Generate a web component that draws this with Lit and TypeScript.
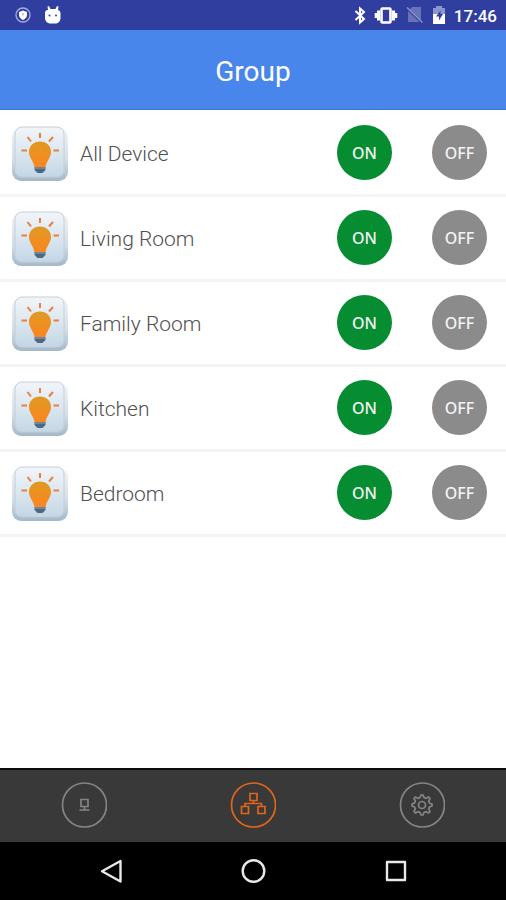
import { LitElement, html, css, svg } from "lit";
import { customElement, property, state } from "lit/decorators.js";
import { classMap } from "lit/directives/class-map.js";

const bulbIcon = html`<svg class="bulb" viewBox="0 0 58 56" aria-hidden="true">
  <defs>
    <linearGradient id="tile" x1="0" y1="0" x2="0" y2="1">
      <stop offset="0" stop-color="#f1f5f9" />
      <stop offset="0.5" stop-color="#dbe7f0" />
      <stop offset="1" stop-color="#c3d6e6" />
    </linearGradient>
    <linearGradient id="rim" x1="0" y1="0" x2="0" y2="1">
      <stop offset="0" stop-color="#f1f4f7" />
      <stop offset="0.6" stop-color="#d3dee8" />
      <stop offset="1" stop-color="#a3b8ca" />
    </linearGradient>
    <linearGradient id="glass" x1="0" y1="0" x2="0" y2="1">
      <stop offset="0" stop-color="#df9a22" />
      <stop offset="1" stop-color="#fb8522" />
    </linearGradient>
  </defs>
  <rect x="1" y="2" width="56" height="53" rx="9" fill="url(#rim)" />
  <rect x="4" y="1" width="49" height="50" rx="7" fill="url(#tile)" stroke="#c5ced6" />
  <path d="M29 15.500c-6.500 0-11 4.500-11 10.500 0 5.500 4 8 5.500 15h11c1.500-7 5.500-9.500 5.500-15C40 20 35.500 15.500 29 15.500z" fill="url(#glass)" />
  <path d="M23.500 41h11v3l-3 3h-5l-3-3z" fill="#4c6980" />
  <path d="M23.500 42h11" stroke="#8fa5b8" />
  <g stroke="#ee7d40" stroke-width="2" fill="none">
    <path d="M29 7v5M16.500 11l3.500 4.500M42 11l-4 4.500M10.500 24.500h5.500M42.500 24.500h5.500" />
  </g>
</svg>`;

const tabIcons = {
  device: svg`<path d="M20 17.500h7v7h-7zM23.500 25v3M18.500 28h10" />`,
  group: svg`<path d="M20 11.500h7v7h-7zM11.500 24.500h7v7h-7zM28 24.500h7v7h-7zM23.500 18.500v3M15 24.500v-3h16.500v3" />`,
  settings: svg`<circle cx="23" cy="23" r="3.500" />
    <path d="M21 15.500 22 13h2l1 2.500 2 .8 2.500-1.300 1.500 1.500-1.300 2.500.8 2 2.500 1v2l-2.500 1-.8 2 1.300 2.500-1.500 1.500-2.500-1.300-2 .8-1 2.500h-2l-1-2.500-2-.8-2.500 1.300-1.500-1.500 1.300-2.500-.8-2-2.500-1v-2l2.500-1 .8-2-1.300-2.500 1.500-1.500 2.500 1.300z" />`,
};

type Tab = keyof typeof tabIcons;

@customElement("status-bar")
class StatusBar extends LitElement {
  static styles = css`
    :host {
      display: flex;
      justify-content: space-between;
      align-items: center;
      height: 30px;
      padding: 0 9px 0 14px;
      background: #303f9f;
      color: #fff;
      font: 500 17px/30px Roboto, sans-serif;
    }
    .side {
      display: flex;
      align-items: center;
    }
    .notices {
      gap: 12px;
    }
    .system {
      gap: 8px;
    }
    svg {
      display: block;
      fill: #fff;
    }
    time {
      padding-top: 2px;
    }
  `;

  render() {
    return html`
      <div class="side notices">
        <svg width="18" height="18" viewBox="0 0 18 18">
          <circle cx="9" cy="9" r="7" fill="none" stroke="#a6addb" stroke-width="1.300" />
          <path d="M9 4.500 13 6v3c0 2.500-2 4-4 5-2-1-4-2.500-4-5V6z" />
          <path d="M8 7.500h2L9 10z" fill="#8f98d0" />
        </svg>
        <svg width="18" height="20" viewBox="0 0 18 20">
          <path d="M3.500 1.500 5 1l1.500 3h5L13 1l1.500.5-.5 3.500a3 3 0 0 1 2.500 3v5c0 3-2 5-4 5.500h-7C3 18 1 16 1 13V8a3 3 0 0 1 3-3z" />
          <circle cx="5.500" cy="10.500" r="1" fill="#303f9f" />
          <circle cx="12" cy="10.500" r="1" fill="#303f9f" />
        </svg>
      </div>
      <div class="side system">
        <svg width="12" height="20" viewBox="0 0 12 20">
          <path d="M1.500 6 10 14l-4 3.500v-14L10 7l-8.500 8" fill="none" stroke="#fff" stroke-width="2" />
        </svg>
        <svg width="24" height="18" viewBox="0 0 24 18">
          <rect x="7.500" y="2.500" width="9" height="14" rx="1" fill="none" stroke="#fff" stroke-width="2.600" />
          <path d="M4.500 4.500v10M19.500 4.500v10" stroke="#fff" stroke-width="3" />
          <path d="M2 7v5M22 7v5" stroke="#fff" stroke-width="2.600" />
        </svg>
        <svg width="18" height="18" viewBox="0 0 18 18">
          <path d="M6 1h9v15H2V5z" fill="#6771b8" />
          <path d="M1 2.500 16.500 17.500" stroke="#303f9f" stroke-width="2" />
          <path d="M1 1.500 16.500 16.500" stroke="#8c95cc" stroke-width="1.300" />
        </svg>
        <svg width="14" height="18" viewBox="0 0 14 18">
          <path d="M4 0h6v2h3v6H1V2h3z" fill="#8c95cc" />
          <path d="M1 8h12v10H1z" />
          <path d="M8.500 4.500 4 10.500h3v4l4-6.500H8.500z" fill="#303f9f" />
        </svg>
        <time>17:46</time>
      </div>
    `;
  }
}

@customElement("group-row")
class GroupRow extends LitElement {
  @property() name = "";

  static styles = css`
    :host {
      display: flex;
      align-items: center;
      gap: 11px;
      padding: 13px 19px 14px 11px;
      border-bottom: 3px solid #f4f4f4;
    }
    .bulb {
      flex: none;
      width: 58px;
      height: 56px;
      margin-bottom: -3px;
    }
    .name {
      flex: 1;
      padding-top: 2px;
      color: #505050;
      font: 300 21px/28px Roboto, sans-serif;
    }
    .actions {
      display: flex;
      gap: 40px;
    }
    .power {
      width: 55px;
      height: 55px;
      padding: 0;
      border: 0;
      border-radius: 50%;
      color: #f4f4f4;
      font: 500 16px/20px "Noto Sans", sans-serif;
      cursor: pointer;
    }
    .on {
      background: #068c31;
    }
    .off {
      background: #8b8b8b;
    }
  `;

  render() {
    return html`
      ${bulbIcon}
      <span class="name">${this.name}</span>
      <div class="actions">
        <button class="power on" aria-label="${this.name} ON">ON</button>
        <button class="power off" aria-label="${this.name} OFF">OFF</button>
      </div>
    `;
  }
}

@customElement("tab-bar")
class TabBar extends LitElement {
  @state() private current: Tab = "group";

  static styles = css`
    :host {
      display: grid;
      grid-template-columns: repeat(3, 1fr);
      justify-items: center;
      padding: 12px 0 14px;
      border-top: 2px solid #0c0c0c;
      background: #393939;
    }
    .tab {
      padding: 0;
      border: 0;
      background: none;
      color: #858585;
      cursor: pointer;
    }
    .current {
      color: #e2661a;
    }
    svg {
      display: block;
      width: 46px;
      height: 46px;
      fill: none;
      stroke: currentColor;
      stroke-width: 1.7;
    }
  `;

  render() {
    return (Object.keys(tabIcons) as Tab[]).map(
      (tab) => html`<button
        class=${classMap({ tab: true, current: tab === this.current })}
        aria-label=${tab}
        @click=${() => (this.current = tab)}
      >
        <svg viewBox="0 0 46 46"><circle cx="23.500" cy="23" r="22" />${tabIcons[tab]}</svg>
      </button>`
    );
  }
}

@customElement("nav-keys")
class NavKeys extends LitElement {
  static styles = css`
    :host {
      display: grid;
      grid-template-columns: repeat(3, 1fr);
      justify-items: center;
      align-items: center;
      height: 58px;
      padding: 0 8%;
      background: #000;
    }
    .key {
      padding: 0;
      border: 0;
      background: none;
      cursor: pointer;
    }
    svg {
      display: block;
      width: 26px;
      height: 26px;
      fill: none;
      stroke: #e8e8e8;
      stroke-width: 2.4;
      stroke-linejoin: round;
    }
  `;

  render() {
    return html`
      <button class="key" aria-label="back">
        <svg viewBox="0 0 26 26"><path d="M22.500 3v20.500L4 13.200z" /></svg>
      </button>
      <button class="key" aria-label="home">
        <svg viewBox="0 0 26 26"><circle cx="13.500" cy="13" r="10.800" /></svg>
      </button>
      <button class="key" aria-label="recents">
        <svg viewBox="0 0 26 26"><rect x="5" y="4" width="18" height="18" /></svg>
      </button>
    `;
  }
}

@customElement("app-root")
class AppRoot extends LitElement {
  private groups = ["All Device", "Living Room", "Family Room", "Kitchen", "Bedroom"];

  static styles = css`
    :host {
      display: flex;
      flex-direction: column;
      min-height: 100vh;
      background: #fff;
    }
    .title {
      margin: 0;
      padding: 24px 0 19px;
      border-bottom: 1px solid #3b74d0;
      background: #4986eb;
      color: #fff;
      text-align: center;
      font: 400 28px/36px Roboto, sans-serif;
    }
    .groups {
      flex: 1;
      padding-top: 2px;
    }
  `;

  render() {
    return html`
      <status-bar></status-bar>
      <h1 class="title">Group</h1>
      <main class="groups">
        ${this.groups.map((name) => html`<group-row .name=${name}></group-row>`)}
      </main>
      <tab-bar></tab-bar>
      <nav-keys></nav-keys>
    `;
  }
}
